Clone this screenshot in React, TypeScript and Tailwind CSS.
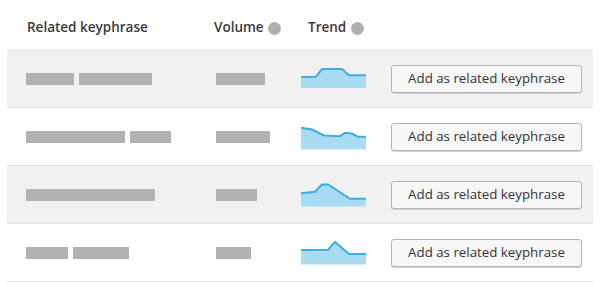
import React from "react";

type Row = {
  h: string;
  bg: string;
  words: number[];
  vol: number;
  line: [number, number][];
  base: number;
};

const rows: Row[] = [
  {
    h: "h-[57px]",
    bg: "bg-[#f1f1f1]",
    words: [48, 73],
    vol: 49,
    line: [[0, 11], [15, 10.7], [21, 3], [41, 3], [48, 9.3], [65, 9.3]],
    base: 22,
  },
  {
    h: "h-[58px]",
    bg: "bg-white",
    words: [99, 41],
    vol: 54,
    line: [[0, 3.8], [11, 5.5], [23, 11.5], [39, 12.2], [44, 8.8], [51, 9.5], [57, 12.8], [65, 12.8]],
    base: 25.5,
  },
  {
    h: "h-[58px]",
    bg: "bg-[#f1f1f1]",
    words: [129],
    vol: 41,
    line: [[0, 11.2], [14, 9.8], [21, 2.5], [27, 2.5], [49, 16.8], [65, 16.8]],
    base: 24.5,
  },
  {
    h: "h-[58px]",
    bg: "bg-white",
    words: [42, 56],
    vol: 35,
    line: [[0, 10], [27, 9.7], [34, 2], [48, 14], [65, 14]],
    base: 24.5,
  },
];

const Trend = ({ line, base }: { line: [number, number][]; base: number }) => {
  const pts = line.map(([x, y]) => `${x},${y}`).join(" ");
  return (
    <svg width="65" height="26" viewBox="0 0 65 26" className="block">
      <polygon points={`${pts} 65,${base} 0,${base}`} fill="#a9dcf2" />
      <polyline points={pts} fill="none" stroke="#3aade4" strokeWidth="2" />
    </svg>
  );
};

const InfoDot = () => (
  <span className="inline-block w-[13px] h-[13px] rounded-full bg-[#b0b0b0] mt-[2px]" />
);

export default function App() {
  return (
    <div className="w-[600px] h-[285px] bg-white overflow-hidden font-['Open_Sans',sans-serif]">
      <div className="mx-[7px]">
        <div className="h-[50px] flex items-center pl-[20px] pt-[5px] text-[13.5px] font-semibold text-[#3a3a3a]">
          <div className="w-[187px]">Related keyphrase</div>
          <div className="w-[94px] flex items-center gap-[4px]">
            Volume
            <InfoDot />
          </div>
          <div className="flex items-center gap-[5px]">
            Trend
            <InfoDot />
          </div>
        </div>

        <div className="border-t border-[#e3e3e3]">
          {rows.map((r, i) => (
            <div
              key={i}
              className={`${r.h} ${r.bg} border-b border-[#e3e3e3] flex items-center pl-[19px]`}
            >
              <div className="w-[190px] flex gap-[5px]">
                {r.words.map((w, j) => (
                  <span key={j} className="h-[12px] bg-[#b2b2b2]" style={{ width: w }} />
                ))}
              </div>
              <div className="w-[85px]">
                <span className="block h-[12px] bg-[#b2b2b2]" style={{ width: r.vol }} />
              </div>
              <div className="w-[90px]">
                <Trend line={r.line} base={r.base} />
              </div>
              <button className="w-[191px] h-[28px] rounded-[3px] border border-[#b4b4b4] bg-[#f7f7f7] shadow-[0_1px_0_#d4d4d4] text-[13.3px] text-[#333] leading-none">
                Add as related keyphrase
              </button>
            </div>
          ))}
        </div>
      </div>
    </div>
  );
}
